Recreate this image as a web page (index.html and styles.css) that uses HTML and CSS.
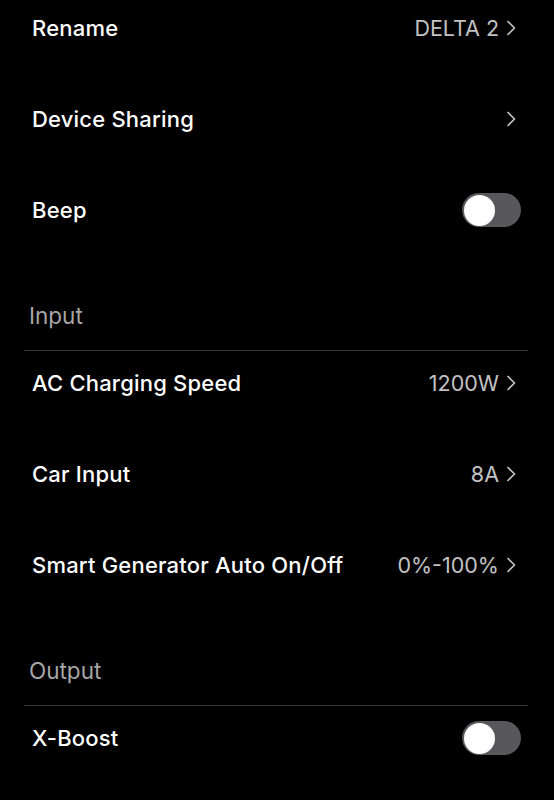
FILE: index.html
```html
<!DOCTYPE html>
<html lang="en">
<head>
<meta charset="utf-8">
<title>Settings</title>
<link rel="stylesheet" href="styles.css">
</head>
<body>
<main class="page">
  <div class="row">
    <span class="label">Rename</span>
    <span class="value">DELTA 2<svg class="chev" viewBox="0 0 10 16" width="10" height="16"><path d="M2 1.5 L8.5 8 L2 14.5"/></svg></span>
  </div>
  <div class="row gap">
    <span class="label">Device Sharing</span>
    <span class="value"><svg class="chev" viewBox="0 0 10 16" width="10" height="16"><path d="M2 1.5 L8.5 8 L2 14.5"/></svg></span>
  </div>
  <div class="row gap">
    <span class="label">Beep</span>
    <span class="toggle"><span class="knob"></span></span>
  </div>

  <div class="section">Input</div>
  <div class="row">
    <span class="label">AC Charging Speed</span>
    <span class="value">1200W<svg class="chev" viewBox="0 0 10 16" width="10" height="16"><path d="M2 1.5 L8.5 8 L2 14.5"/></svg></span>
  </div>
  <div class="row gap">
    <span class="label">Car Input</span>
    <span class="value">8A<svg class="chev" viewBox="0 0 10 16" width="10" height="16"><path d="M2 1.5 L8.5 8 L2 14.5"/></svg></span>
  </div>
  <div class="row gap">
    <span class="label">Smart Generator Auto On/Off</span>
    <span class="value">0%-100%<svg class="chev" viewBox="0 0 10 16" width="10" height="16"><path d="M2 1.5 L8.5 8 L2 14.5"/></svg></span>
  </div>

  <div class="section">Output</div>
  <div class="row">
    <span class="label">X-Boost</span>
    <span class="toggle"><span class="knob"></span></span>
  </div>
</main>
</body>
</html>
```

FILE: styles.css
```css
html, body {
  margin: 0;
  padding: 0;
  background: #000;
}
body {
  font-family: Inter, "Noto Sans", "Liberation Sans", sans-serif;
  color: #fff;
  overflow: hidden;
  height: 800px;
}
.page {
  margin-top: -4px;
  padding: 0 26px 0 24px;
}
.row {
  height: 64px;
  display: flex;
  align-items: center;
  justify-content: space-between;
  padding: 0 7px 0 8px;
}
.row.gap {
  margin-top: 27px;
}
.label {
  font-size: 22px;
  font-weight: 500;
  letter-spacing: 0.2px;
}
.value {
  display: flex;
  align-items: center;
  font-size: 21.5px;
  color: #c2c2c2;
  font-weight: 400;
}
.chev {
  margin-left: 7px;
  margin-right: 5px;
  fill: none;
  stroke: #c2c2c2;
  stroke-width: 1.7;
  stroke-linecap: round;
  stroke-linejoin: round;
}
.toggle {
  width: 59px;
  height: 34px;
  border-radius: 17px;
  background: #58585c;
  display: flex;
  align-items: center;
  padding-left: 1.5px;
  box-sizing: border-box;
}
.knob {
  width: 31px;
  height: 31px;
  border-radius: 50%;
  background: #fff;
}
.section {
  margin-top: 62px;
  padding: 0 0 22px 5px;
  line-height: 24px;
  font-size: 22.5px;
  color: #a6a6a6;
  border-bottom: 1px solid #333;
}
```
